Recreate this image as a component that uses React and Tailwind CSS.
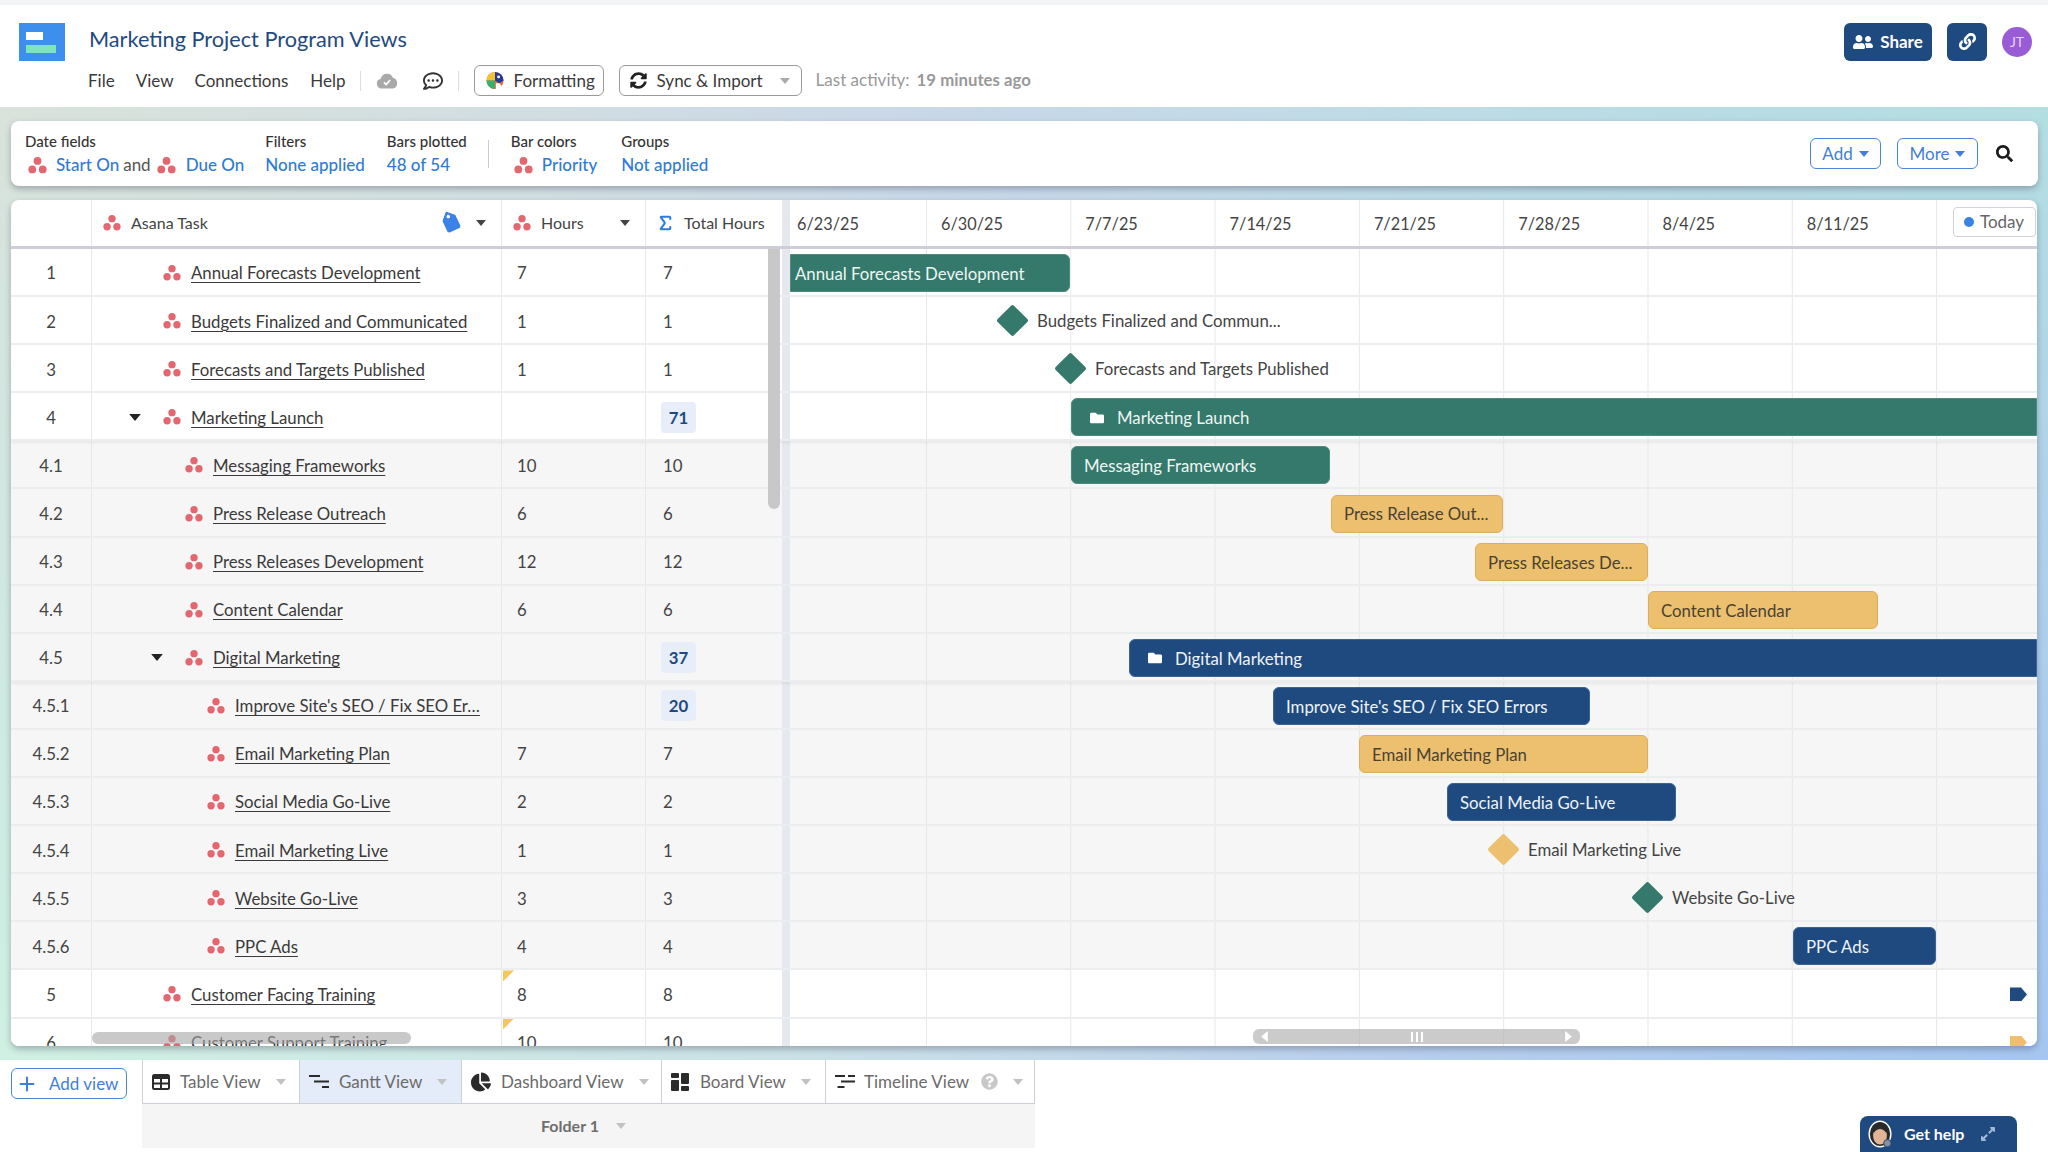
import React from "react";
import { FaUserFriends, FaLink, FaRegCommentDots, FaSyncAlt, FaSearch, FaTag, FaFolder, FaChartPie, FaQuestionCircle, FaExpandAlt } from "react-icons/fa";
import { Plus, Sigma } from "lucide-react";

function Asana({ className = "w-[18px] h-[18px]" }) {
  return (
    <svg viewBox="0 0 24 24" className={`shrink-0 ${className}`} fill="#e4666f">
      <circle cx="12" cy="6.2" r="4.9" />
      <circle cx="5.4" cy="17" r="4.9" />
      <circle cx="18.6" cy="17" r="4.9" />
    </svg>
  );
}

function Caret({ className = "text-[#b4b4b4]" }) {
  return (
    <svg viewBox="0 0 10 6" className={`w-[10px] h-[6px] shrink-0 ${className}`} fill="currentColor">
      <polygon points="0,0 10,0 5,6" />
    </svg>
  );
}

function Folder() {
  return <FaFolder className="w-[16px] h-[14px] text-white shrink-0" />;
}

const bars = {
  green: "bg-[#34796b] text-[#eef6f3] border-[#4d8b7f]",
  navy: "bg-[#1f4a80] text-[#eef3f9] border-[#3b6396]",
  orange: "bg-[#ecc06e] text-[#4b4232] border-[#dcae5c]",
};

function Bar({ color, pos, pad = "pl-[12px]", round = "rounded-[6px]", children }) {
  return (
    <div className={`h-[38px] pt-[1px] flex items-center text-[16.8px] border whitespace-nowrap overflow-hidden ${bars[color]} ${pos} ${pad} ${round}`}>
      {children}
    </div>
  );
}

function Diamond({ color, pos, label }) {
  const c = color === "green" ? "bg-[#34796b]" : "bg-[#ecc06e]";
  return (
    <div className={`flex items-center mt-[-2px] ${pos}`}>
      <div className={`w-[23px] h-[23px] rotate-45 rounded-[2px] ${c}`} />
      <span className="ml-[13px] text-[16.8px] text-[#444444] whitespace-nowrap">{label}</span>
    </div>
  );
}

const rows = [
  { n: "1", name: "Annual Forecasts Development", d: 0, h: "7", t: "7",
    g: <Bar color="green" pos="w-[280px]" pad="pl-[4px]" round="rounded-r-[6px]">Annual Forecasts Development</Bar> },
  { n: "2", name: "Budgets Finalized and Communicated", d: 0, h: "1", t: "1",
    g: <Diamond color="green" pos="ml-[211px]" label="Budgets Finalized and Commun..." /> },
  { n: "3", name: "Forecasts and Targets Published", d: 0, h: "1", t: "1",
    g: <Diamond color="green" pos="ml-[269px]" label="Forecasts and Targets Published" /> },
  { n: "4", name: "Marketing Launch", d: 0, t: "71", badge: true, caret: true, shade: true,
    g: <Bar color="green" pos="ml-[281px] flex-1" pad="pl-[17px]" round="rounded-l-[6px]"><Folder /><span className="ml-[12px]">Marketing Launch</span></Bar> },
  { n: "4.1", name: "Messaging Frameworks", d: 1, h: "10", t: "10", gray: true,
    g: <Bar color="green" pos="ml-[281px] w-[259px]">Messaging Frameworks</Bar> },
  { n: "4.2", name: "Press Release Outreach", d: 1, h: "6", t: "6", gray: true,
    g: <Bar color="orange" pos="ml-[541px] w-[172px]">Press Release Out...</Bar> },
  { n: "4.3", name: "Press Releases Development", d: 1, h: "12", t: "12", gray: true,
    g: <Bar color="orange" pos="ml-[685px] w-[173px]">Press Releases De...</Bar> },
  { n: "4.4", name: "Content Calendar", d: 1, h: "6", t: "6", gray: true,
    g: <Bar color="orange" pos="ml-[858px] w-[230px]">Content Calendar</Bar> },
  { n: "4.5", name: "Digital Marketing", d: 1, t: "37", badge: true, caret: true, gray: true, shade: true,
    g: <Bar color="navy" pos="ml-[339px] flex-1" pad="pl-[17px]" round="rounded-l-[6px]"><Folder /><span className="ml-[12px]">Digital Marketing</span></Bar> },
  { n: "4.5.1", name: "Improve Site's SEO / Fix SEO Er…", d: 2, t: "20", badge: true, gray: true,
    g: <Bar color="navy" pos="ml-[483px] w-[317px]">Improve Site's SEO / Fix SEO Errors</Bar> },
  { n: "4.5.2", name: "Email Marketing Plan", d: 2, h: "7", t: "7", gray: true,
    g: <Bar color="orange" pos="ml-[569px] w-[289px]">Email Marketing Plan</Bar> },
  { n: "4.5.3", name: "Social Media Go-Live", d: 2, h: "2", t: "2", gray: true,
    g: <Bar color="navy" pos="ml-[657px] w-[229px]">Social Media Go-Live</Bar> },
  { n: "4.5.4", name: "Email Marketing Live", d: 2, h: "1", t: "1", gray: true,
    g: <Diamond color="orange" pos="ml-[702px]" label="Email Marketing Live" /> },
  { n: "4.5.5", name: "Website Go-Live", d: 2, h: "3", t: "3", gray: true,
    g: <Diamond color="green" pos="ml-[846px]" label="Website Go-Live" /> },
  { n: "4.5.6", name: "PPC Ads", d: 2, h: "4", t: "4", gray: true,
    g: <Bar color="navy" pos="ml-[1003px] w-[143px]">PPC Ads</Bar> },
  { n: "5", name: "Customer Facing Training", d: 0, h: "8", t: "8", flag: true,
    g: <div className="ml-[1220px] w-[17px] h-[14px] bg-[#1f4a80] [clip-path:polygon(0_0,65%_0,100%_50%,65%_100%,0_100%)]" /> },
  { n: "6", name: "Customer Support Training", d: 0, h: "10", t: "10", flag: true,
    g: <div className="ml-[1220px] w-[17px] h-[14px] bg-[#ecc06e] [clip-path:polygon(0_0,65%_0,100%_50%,65%_100%,0_100%)]" /> },
];

const indent = ["pl-[71px]", "pl-[93px]", "pl-[115px]"];
const caretPos = ["ml-[-34px]", "ml-[-34px]"];

function Row({ r }) {
  const bg = r.gray ? "bg-[#f6f6f6]" : "bg-white";
  const cell = "h-full pt-[2px] border-r border-[#e7e8ea] flex items-center";
  return (
    <div className={`h-[48.1px] shrink-0 flex border-b-2 border-[#ecedef] text-[16.8px] text-[#444444] ${bg} ${r.shade ? "shadow-[0_2px_3px_rgba(0,0,0,0.06)] relative" : ""}`}>
      <div className={`${cell} w-[81px] justify-center`}>{r.n}</div>
      <div className={`${cell} w-[410px] ${indent[r.d]}`}>
        {r.caret && <Caret className={`text-[#222222] mr-[22px] ${caretPos[r.d]} w-[12px] h-[7px]`} />}
        <Asana />
        <span className="ml-[10px] underline underline-offset-[3px] decoration-[1px] text-[#3a3a3a] whitespace-nowrap">{r.name}</span>
      </div>
      <div className={`${cell} w-[144px] pl-[15px] relative`}>
        {r.flag && <div className="absolute left-[1px] top-0 w-[11px] h-[11px] bg-[#f2c75c] [clip-path:polygon(0_0,100%_0,0_100%)]" />}
        {r.h}
      </div>
      <div className="h-full pt-[2px] w-[136px] flex items-center pl-[17px]">
        {r.badge ? (
          <span className="ml-[-2px] w-[35px] h-[31px] rounded-[4px] bg-[#e7eefa] text-[#1f4a80] font-bold flex items-center justify-center">{r.t}</span>
        ) : r.t}
      </div>
      <div className="h-full w-[8px] bg-[#e6e8ef]" />
      <div className="h-full pt-[2px] flex-1 min-w-0 flex items-center bg-[linear-gradient(to_right,#e6e7eb_1px,transparent_1px)] bg-size-[144.3px_100%] bg-position-[136px_0]">
        {r.g}
      </div>
    </div>
  );
}

function Field({ label, children, className = "" }) {
  return (
    <div className={`flex flex-col pt-[1px] ${className}`}>
      <div className="text-[15px] leading-[18px] text-[#333333] font-medium">{label}</div>
      <div className="mt-[4px] flex items-center text-[17px] leading-[22px] text-[#2f7bd6] font-medium whitespace-nowrap">{children}</div>
    </div>
  );
}

function Tab({ w, active, icon, label, extra, gap = "ml-[10px]" }) {
  return (
    <div className={`h-full ${w} border-r border-[#ccd0d6] flex items-center pl-[9px] text-[17px] text-[#6b6b6b] ${active ? "bg-[#e4ecfa]" : "bg-white"}`}>
      {icon}
      <span className={`${gap} whitespace-nowrap`}>{label}</span>
      {extra}
      <Caret className="text-[#c2c2c2] ml-[15px]" />
    </div>
  );
}

const weeks = ["6/30/25", "7/7/25", "7/14/25", "7/21/25", "7/28/25", "8/4/25", "8/11/25"];

export default function App() {
  return (
    <div className="relative w-[2048px] h-[1152px] overflow-hidden flex flex-col bg-white font-['Lato',sans-serif] text-[#444444]">
      <div className="h-[5px] shrink-0 bg-[#f2f3f4]" />

      {/* Header */}
      <header className="h-[102px] shrink-0 pt-[17px] bg-white">
        <div className="h-[39px] flex items-center pl-[19px] pr-[16px]">
          <svg viewBox="0 0 46 38" className="w-[46px] h-[38px] shrink-0">
            <rect width="46" height="38" fill="#3d8fee" />
            <rect x="7" y="9" width="17" height="8" fill="#ffffff" />
            <rect x="7" y="22" width="30" height="8" fill="#7fe3c0" />
          </svg>
          <h1 className="ml-[24px] mb-[3px] text-[21.7px] leading-none text-[#1f4a80] whitespace-nowrap">Marketing Project Program Views</h1>
          <div className="ml-auto flex items-center">
            <button className="w-[88px] h-[38px] rounded-[6px] bg-[#1f4a80] text-white text-[17px] font-bold flex items-center justify-center gap-[7px]">
              <FaUserFriends className="w-[20px] h-[16px]" /> Share
            </button>
            <button className="ml-[15px] w-[40px] h-[38px] rounded-[6px] bg-[#1f4a80] text-white flex items-center justify-center">
              <FaLink className="w-[17px] h-[17px]" />
            </button>
            <div className="ml-[15px] w-[30px] h-[30px] rounded-full bg-[#9a5bd6] text-[#e6d6f5] text-[14px] flex items-center justify-center">JT</div>
          </div>
        </div>
        <div className="mt-[4px] h-[31px] flex items-center pl-[88px] text-[17px] text-[#3a3a3a]">
          <span>File</span>
          <span className="ml-[21px]">View</span>
          <span className="ml-[21px]">Connections</span>
          <span className="ml-[22px]">Help</span>
          <div className="ml-[14px] w-px h-[20px] bg-[#dddddd]" />
          <svg viewBox="0 0 24 18" className="ml-[15px] w-[22px] h-[16px]">
            <path d="M6 17.5a5.5 5.5 0 0 1-.9-10.9A7 7 0 0 1 18.6 5.4 6.2 6.2 0 0 1 18.5 17.5z" fill="#a9a9a9" />
            <polyline points="8.5,10.5 11,13 15.5,8" fill="none" stroke="#ffffff" strokeWidth="1.8" />
          </svg>
          <FaRegCommentDots className="ml-[25px] w-[20px] h-[20px] text-[#333333]" />
          <div className="ml-[15px] w-px h-[20px] bg-[#dddddd]" />
          <button className="ml-[15px] w-[130px] h-[31px] rounded-[6px] border border-[#9a9a9a] flex items-center pl-[11px]">
            <svg viewBox="0 0 20 20" className="w-[18px] h-[19px] shrink-0">
              <circle cx="10" cy="10" r="9.5" fill="#f06a3c" />
              <path d="M10 10 L0.5 10 A9.5 9.5 0 0 1 10 .5 Z" fill="#f4c430" />
              <path d="M10 10 L10 19.5 A9.5 9.5 0 0 1 .5 10 Z" fill="#35b36b" />
              <path d="M10 10 L10 .5 A9.5 9.5 0 0 1 19.5 10 L15 13 Z" fill="#233a9c" />
              <circle cx="14" cy="6" r="1.6" fill="#ffffff" />
              <path d="M15 13 L20 20 L11 20 L11 13 Z" fill="#ffffff" />
            </svg>
            <span className="ml-[10px]">Formatting</span>
          </button>
          <button className="ml-[15px] w-[183px] h-[31px] rounded-[6px] border border-[#9a9a9a] flex items-center pl-[10px]">
            <FaSyncAlt className="w-[17px] h-[17px] text-[#222222]" />
            <span className="ml-[10px]">Sync & Import</span>
            <Caret className="ml-[17px] text-[#aaaaaa]" />
          </button>
          <span className="ml-[14px] mb-[1px] text-[#999999]">Last activity:</span>
          <span className="ml-[7px] mb-[1px] text-[#999999] font-bold text-[16.8px]">19 minutes ago</span>
        </div>
      </header>

      {/* Canvas */}
      <main className="h-[953px] shrink-0 px-[11px] pt-[14px] bg-[radial-gradient(circle_at_0%_100%,#cff0e2_0%,transparent_60%),radial-gradient(circle_at_100%_100%,#a5c6f0_0%,transparent_55%),radial-gradient(circle_at_100%_0%,#b8e6dc_0%,transparent_50%),radial-gradient(circle_at_0%_0%,#dddcd8_0%,transparent_45%),linear-gradient(#c7d6ea,#c7d6ea)]">
        <section className="h-[65px] bg-white rounded-[8px] shadow-[0_3px_6px_rgba(60,60,80,0.35)] flex items-center pl-[14px] pr-[25px] ml-0 mr-[-1px]">
          <Field label="Date fields">
            <Asana className="w-[19px] h-[19px] ml-[3px]" /><span className="ml-[9px]">Start On</span>
            <span className="ml-[4px] text-[#555555] font-normal">and</span>
            <Asana className="w-[19px] h-[19px] ml-[6px]" /><span className="ml-[10px]">Due On</span>
          </Field>
          <Field label="Filters" className="ml-[21px]">None applied</Field>
          <Field label="Bars plotted" className="ml-[22px]">48 of 54</Field>
          <div className="ml-[21px] w-px h-[28px] bg-[#cccccc]" />
          <Field label="Bar colors" className="ml-[22px]">
            <Asana className="w-[19px] h-[19px] ml-[3px]" /><span className="ml-[9px]">Priority</span>
          </Field>
          <Field label="Groups" className="ml-[24px]">Not applied</Field>
          <div className="ml-auto flex items-center">
            <button className="w-[71px] h-[31px] rounded-[6px] border border-[#4a86d8] text-[#3f7fd6] text-[17px] flex items-center justify-center gap-[6px]">
              Add <Caret className="text-[#3f7fd6] w-[8px] h-[5px]" />
            </button>
            <button className="ml-[16px] w-[81px] h-[31px] rounded-[6px] border border-[#4a86d8] text-[#3f7fd6] text-[17px] flex items-center justify-center gap-[6px]">
              More <Caret className="text-[#3f7fd6] w-[8px] h-[5px]" />
            </button>
            <FaSearch className="ml-[18px] w-[17px] h-[17px] text-[#1a1a1a]" />
          </div>
        </section>

        <section className="relative mt-[14px] h-[846px] bg-white rounded-[8px] overflow-hidden shadow-[0_3px_6px_rgba(60,60,80,0.35)]">
          {/* Column header */}
          <div className="h-[49px] flex border-b-[3px] border-[#cdced9] text-[16px] text-[#444444]">
            <div className="w-[81px] h-full border-r border-[#e7e8ea]" />
            <div className="w-[410px] h-full border-r border-[#e7e8ea] flex items-center pl-[11px]">
              <Asana /><span className="ml-[10px]">Asana Task</span>
              <FaTag className="ml-auto w-[19px] h-[19px] text-[#3b82e6] rotate-[20deg]" />
              <Caret className="ml-[15px] mr-[15px]" />
            </div>
            <div className="w-[144px] h-full border-r border-[#e7e8ea] flex items-center pl-[11px]">
              <Asana /><span className="ml-[10px]">Hours</span>
              <Caret className="ml-auto mr-[15px]" />
            </div>
            <div className="w-[136px] h-full flex items-center pl-[10px]">
              <Sigma className="w-[19px] h-[24px] text-[#2f7bd6]" strokeWidth={2.6} />
              <span className="ml-[9px] whitespace-nowrap">Total Hours</span>
            </div>
            <div className="w-[8px] h-full bg-[#e6e8ef]" />
            <div className="flex-1 min-w-0 h-full pt-[2px] flex text-[16.3px] bg-[linear-gradient(to_right,#e6e7eb_1px,transparent_1px)] bg-size-[144.3px_100%] bg-position-[136px_0]">
              <div className="w-[136px] shrink-0 pl-[7px] flex items-center">6/23/25</div>
              {weeks.map((w) => (
                <div key={w} className="w-[144.3px] shrink-0 pl-[15px] flex items-center">{w}</div>
              ))}
            </div>
          </div>

          {/* Rows */}
          {rows.map((r) => <Row key={r.n} r={r} />)}

          {/* Today */}
          <button className="absolute top-[7px] right-[1px] w-[83px] h-[30px] bg-white rounded-[4px] border border-[#cfd2d8] flex items-center pl-[10px] text-[17px] text-[#666666]">
            <span className="w-[10px] h-[10px] rounded-full bg-[#3b82e6]" />
            <span className="ml-[6px]">Today</span>
          </button>

          {/* Scrollbars */}
          <div className="absolute left-[757px] top-[49px] w-[12px] h-[260px] rounded-b-[6px] bg-[#c8c8c8]" />
          <div className="absolute left-[81px] top-[832px] w-[319px] h-[12px] rounded-[6px] bg-[rgba(165,165,165,0.6)]" />
          <div className="absolute left-[1242px] top-[829px] w-[327px] h-[15px] rounded-[6px] bg-[rgba(175,175,175,0.65)] flex items-center justify-between px-[8px] text-white">
            <svg viewBox="0 0 6 10" className="w-[7px] h-[11px]" fill="currentColor"><polygon points="6,0 6,10 0,5" /></svg>
            <div className="flex gap-[3px]">
              <div className="w-[2px] h-[10px] bg-white" />
              <div className="w-[2px] h-[10px] bg-white" />
              <div className="w-[2px] h-[10px] bg-white" />
            </div>
            <svg viewBox="0 0 6 10" className="w-[7px] h-[11px]" fill="currentColor"><polygon points="0,0 0,10 6,5" /></svg>
          </div>
        </section>
      </main>

      {/* Tabs */}
      <footer className="flex-1 flex items-start bg-white">
        <button className="ml-[11px] mt-[8px] w-[116px] h-[31px] rounded-[6px] border border-[#4a86d8] text-[#3f7fd6] text-[17px] flex items-center pl-[4px]">
          <Plus className="w-[22px] h-[22px]" strokeWidth={2.2} />
          <span className="ml-[11px]">Add view</span>
        </button>
        <div className="ml-[15px] w-[893px] flex flex-col">
          <div className="h-[44px] flex border-b border-l border-[#ccd0d6]">
            <Tab w="w-[157px]" label="Table View" icon={
              <svg viewBox="0 0 18 16" className="w-[18px] h-[16px] shrink-0">
                <rect width="18" height="16" rx="2.5" fill="#2b2b2b" />
                <rect x="2" y="5" width="6" height="3.5" fill="#fff" />
                <rect x="10" y="5" width="6" height="3.5" fill="#fff" />
                <rect x="2" y="10.5" width="6" height="3.5" fill="#fff" />
                <rect x="10" y="10.5" width="6" height="3.5" fill="#fff" />
              </svg>
            } />
            <Tab w="w-[162px]" active label="Gantt View" icon={
              <svg viewBox="0 0 20 13" className="w-[20px] h-[13px] shrink-0" fill="#2b2b2b">
                <rect x="0" y="0" width="11" height="2" />
                <rect x="5" y="5.5" width="15" height="2" />
                <rect x="13" y="11" width="7" height="2" />
              </svg>
            } />
            <Tab w="w-[200px]" label="Dashboard View" icon={<FaChartPie className="w-[20px] h-[20px] text-[#2b2b2b] shrink-0" />} />
            <Tab w="w-[164px]" label="Board View" gap="ml-[11px]" icon={
              <svg viewBox="0 0 18 18" className="w-[18px] h-[18px] shrink-0" fill="#2b2b2b">
                <rect x="0" y="0" width="8" height="5" rx="1" />
                <rect x="0" y="7" width="8" height="11" rx="1" />
                <rect x="10" y="0" width="8" height="11" rx="1" />
                <rect x="10" y="13" width="8" height="5" rx="1" />
              </svg>
            } />
            <Tab w="w-[209px]" label="Timeline View" gap="ml-[9px]" icon={
              <svg viewBox="0 0 20 13" className="w-[20px] h-[13px] shrink-0" fill="#2b2b2b">
                <rect x="0" y="0" width="10" height="2" />
                <rect x="13" y="0" width="7" height="2" />
                <rect x="6" y="5.5" width="14" height="2" />
                <rect x="2.5" y="11" width="7" height="2" />
              </svg>
            } extra={<FaQuestionCircle className="ml-[12px] w-[17px] h-[17px] text-[#c8c8c8]" />} />
          </div>
          <div className="h-[44px] pr-[10px] bg-[#f5f5f5] flex items-center justify-center text-[16px] font-bold text-[#6f6f6f]">
            Folder 1
            <Caret className="ml-[17px] text-[#c2c2c2]" />
          </div>
        </div>
      </footer>

      {/* Help */}
      <div className="absolute left-[1860px] top-[1116px] w-[157px] h-[36px] rounded-t-[8px] bg-[#1f4a80] flex items-center pl-[8px] text-white text-[16px] font-bold">
        <svg viewBox="0 0 26 30" className="w-[24px] h-[28px] shrink-0">
          <ellipse cx="13" cy="15" rx="12.5" ry="14.5" fill="#ffffff" />
          <ellipse cx="13" cy="15" rx="11" ry="13" fill="#2a2a2a" />
          <ellipse cx="13" cy="17" rx="7.5" ry="9.5" fill="#e2b596" />
          <path d="M6 14 Q13 5 20 14 L20 8 Q13 3 6 8 Z" fill="#2a2a2a" />
          <circle cx="21" cy="25" r="4" fill="#8a8f98" stroke="#1f4a80" />
        </svg>
        <span className="ml-[12px]">Get help</span>
        <FaExpandAlt className="ml-[16px] w-[16px] h-[16px] text-[#9fb8d6]" />
      </div>
    </div>
  );
}
